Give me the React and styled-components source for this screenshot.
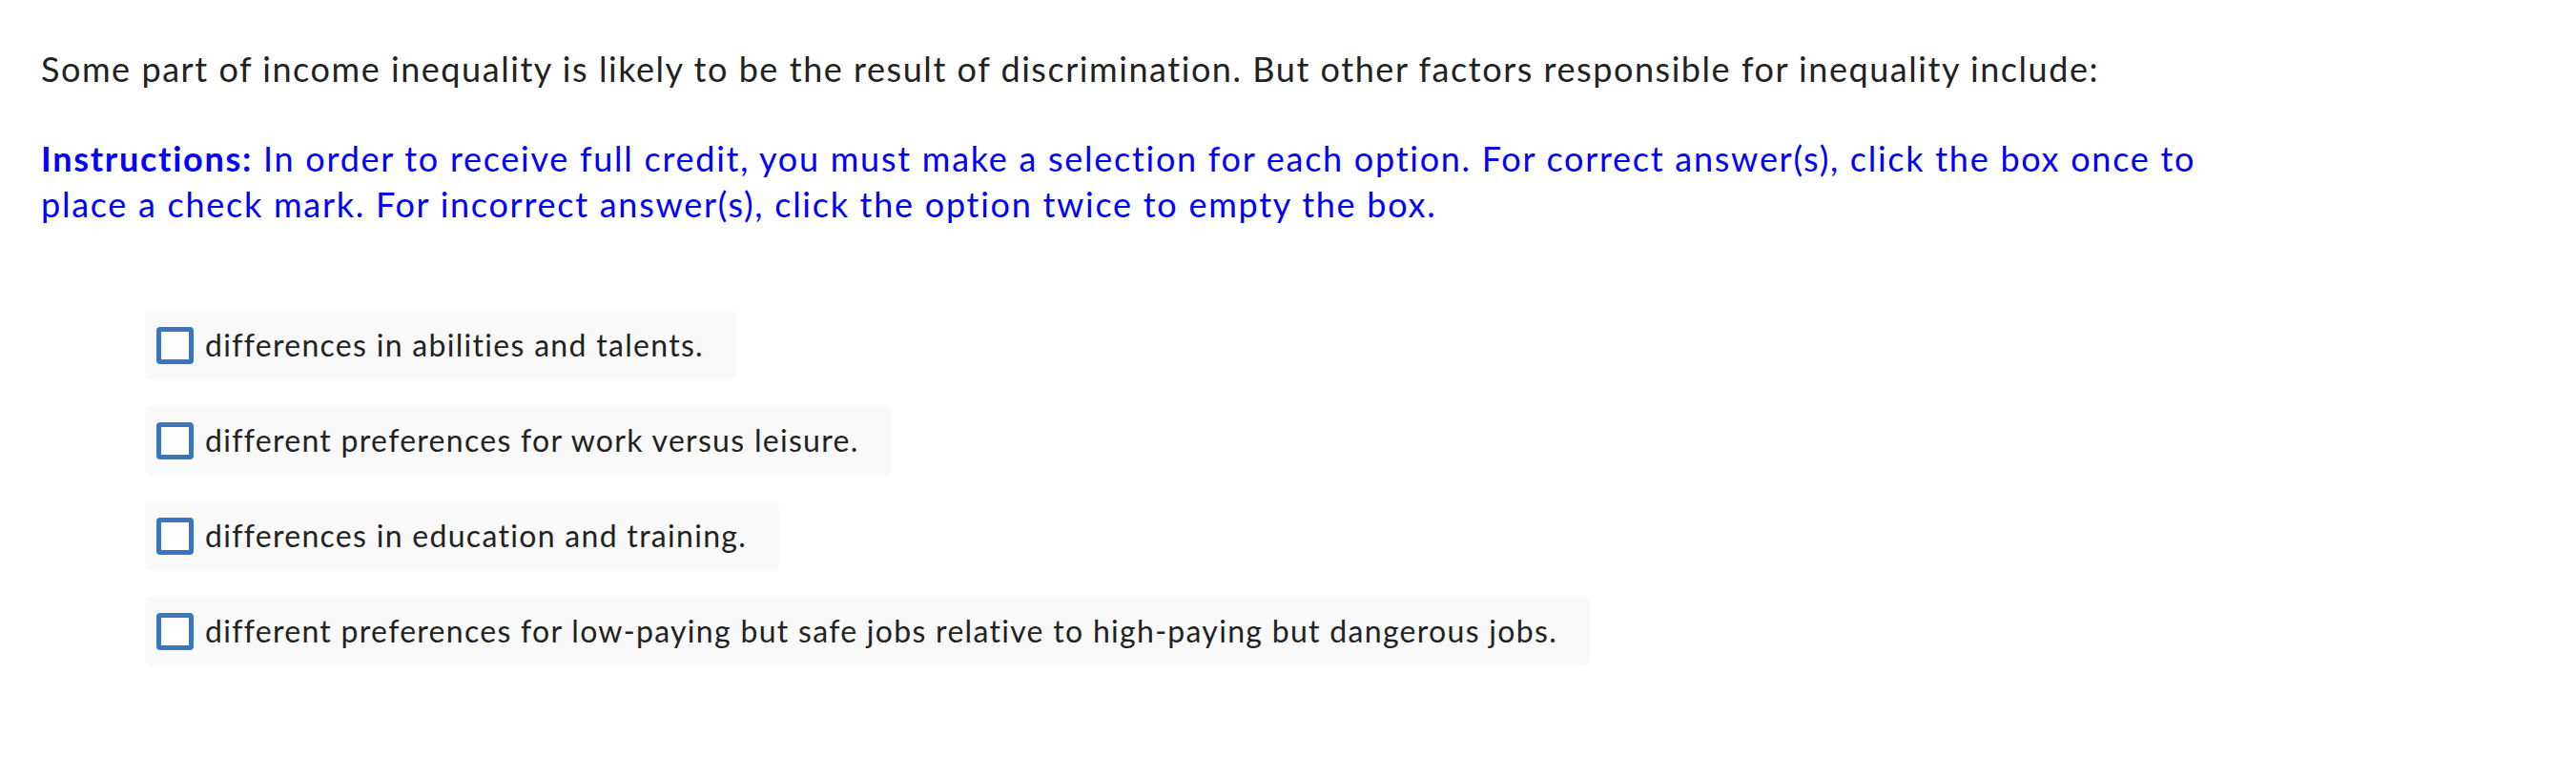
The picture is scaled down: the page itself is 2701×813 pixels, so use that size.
import React from "react";
import styled, { createGlobalStyle } from "styled-components";

const GlobalStyle = createGlobalStyle`
  body {
    margin: 0;
    background: #ffffff;
    font-family: Lato, "Liberation Sans", sans-serif;
    font-variant-ligatures: none;
  }
`;

const Page = styled.div`
  padding: 48px 43px 0 43px;
  font-size: 36px;
  line-height: 48px;
  letter-spacing: 1.55px;
  color: #222222;
`;

const Prompt = styled.p`
  margin: 0 0 46px 0;
`;

const Instructions = styled.p`
  margin: 0;
  color: #0000ff;
  width: 2290px;
  letter-spacing: 1.73px;

  strong {
    font-weight: 700;
  }
`;

const OptionList = styled.div`
  display: flex;
  flex-direction: column;
  align-items: flex-start;
  gap: 26px;
  margin-top: 87px;
  padding-left: 109px;
`;

const Option = styled.label`
  display: flex;
  align-items: center;
  gap: 12px;
  height: 74px;
  padding: 0 34px 0 12px;
  background: #f9f9f9;
  border-radius: 8px;
  color: #222222;
  font-size: 32px;
  letter-spacing: 1.3px;
  cursor: pointer;
`;

const Box = styled.span`
  box-sizing: border-box;
  width: 39px;
  height: 39px;
  border: 5px solid #3a76bf;
  border-radius: 4px;
  background: #ffffff;
  flex-shrink: 0;
`;

const options = [
  "differences in abilities and talents.",
  "different preferences for work versus leisure.",
  "differences in education and training.",
  "different preferences for low-paying but safe jobs relative to high-paying but dangerous jobs.",
];

const App = () => {
  return (
    <>
      <GlobalStyle />
      <Page>
        <Prompt>
          Some part of income inequality is likely to be the result of
          discrimination. But other factors responsible for inequality include:
        </Prompt>
        <Instructions>
          <strong>Instructions:</strong> In order to receive full credit, you
          must make a selection for each option. For correct answer(s), click
          the box once to place a check mark. For incorrect answer(s), click
          the option twice to empty the box.
        </Instructions>
        <OptionList>
          {options.map((text) => (
            <Option key={text}>
              <Box />
              <span>{text}</span>
            </Option>
          ))}
        </OptionList>
      </Page>
    </>
  );
};

export default App;
